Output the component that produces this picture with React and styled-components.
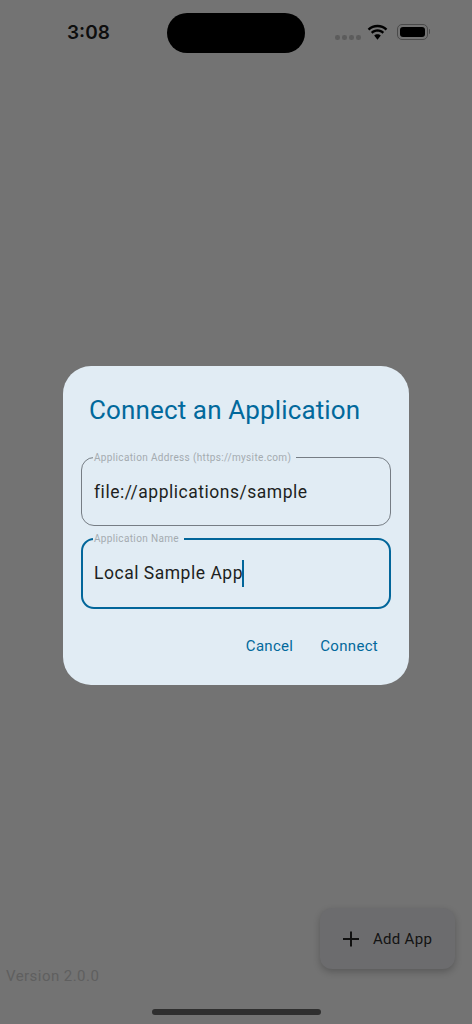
import React from "react";
import styled, { createGlobalStyle } from "styled-components";

const GlobalStyle = createGlobalStyle`
  html, body {
    margin: 0;
    padding: 0;
    background: #737373;
  }
  * {
    box-sizing: border-box;
  }
`;

const Page = styled.div`
  position: relative;
  width: 472px;
  height: 1024px;
  overflow: hidden;
  display: flex;
  flex-direction: column;
  background: #737373;
  font-family: Roboto, "Liberation Sans", sans-serif;
`;

const StatusBar = styled.div`
  height: 53px;
  padding-top: 13px;
  display: grid;
  grid-template-columns: 167px 138px 1fr;
  align-items: start;
`;

const Clock = styled.div`
  padding: 9px 0 0 67px;
  font: 600 19px/21px Inter, "Liberation Sans", sans-serif;
  color: #0e0e0e;
`;

const Island = styled.div`
  height: 40px;
  border-radius: 20px;
  background: #000;
`;

const StatusIcons = styled.div`
  display: flex;
  align-items: center;
  padding: 11px 0 0 30px;
`;

const SignalDots = styled.div`
  display: flex;
  gap: 2.5px;
  margin-top: 11px;
  margin-right: 6.5px;
`;

const SignalDot = styled.span`
  width: 4.5px;
  height: 4.5px;
  border-radius: 50%;
  background: #5c5c5c;
`;

const Battery = styled.div`
  width: 31px;
  height: 16px;
  margin-left: 9px;
  padding: 2px;
  border: 1px solid #4a4a4a;
  border-radius: 5px;
  position: relative;
  &::before {
    content: "";
    display: block;
    height: 100%;
    border-radius: 3px;
    background: #000;
  }
  &::after {
    content: "";
    position: absolute;
    right: -3px;
    top: 4px;
    width: 1.5px;
    height: 5px;
    border-radius: 0 2px 2px 0;
    background: #4a4a4a;
  }
`;

const Body = styled.div`
  flex: 1;
`;

const Footer = styled.div`
  display: flex;
  justify-content: space-between;
  align-items: flex-end;
  padding: 0 17px 0 6px;
  margin-bottom: 23px;
`;

const Version = styled.div`
  font-size: 15px;
  line-height: 20px;
  letter-spacing: 0.45px;
  color: #5f5f5f;
`;

const AddButton = styled.div`
  width: 135px;
  height: 61px;
  margin-bottom: 17px;
  display: flex;
  align-items: center;
  gap: 13px;
  padding-left: 22px;
  border-radius: 12px;
  background: #6c6c6e;
  box-shadow: 0 3px 7px rgba(0, 0, 0, 0.22);
  color: #131313;
  font-size: 15px;
  letter-spacing: 0.3px;
`;

const HomeBar = styled.div`
  width: 169px;
  height: 6px;
  margin: 0 auto 9px;
  border-radius: 3px;
  background: #2f2f2f;
`;

const Scrim = styled.div`
  position: absolute;
  inset: 0;
  display: flex;
  justify-content: center;
  align-items: flex-start;
  padding-top: 366px;
`;

const Dialog = styled.div`
  width: 346px;
  height: 319px;
  padding: 24px 18px 0;
  border-radius: 28px;
  background: #e1ecf4;
`;

const Title = styled.h2`
  margin: 0 0 21px 8px;
  font-size: 26px;
  font-weight: 400;
  line-height: 40px;
  letter-spacing: 0.13px;
  color: #02699c;
`;

const Field = styled.fieldset`
  height: ${(p) => (p.$focused ? "77px" : "75px")};
  margin: 0 0 ${(p) => (p.$focused ? "0" : "6px")};
  padding: 0 0 0 ${(p) => (p.$focused ? "11px" : "12px")};
  min-width: 0;
  border: ${(p) => (p.$focused ? "2px solid #02669a" : "1px solid #767d84")};
  border-radius: 13px;
`;

const FieldLabel = styled.legend`
  padding: 0 5px 0 1px;
  margin-left: -1px;
  font-size: 10px;
  line-height: 13px;
  letter-spacing: 0.35px;
  color: #a4abb0;
`;

const FieldValue = styled.div`
  display: flex;
  align-items: center;
  height: 30px;
  margin-top: 13px;
  font-size: 17.5px;
  letter-spacing: 0.52px;
  color: #1d1f21;
`;

const Caret = styled.span`
  width: 2px;
  height: 27px;
  margin-left: -1px;
  background: #02669a;
`;

const Actions = styled.div`
  display: flex;
  justify-content: flex-end;
  gap: 27px;
  margin-top: 27px;
  padding-right: 13px;
`;

const ActionButton = styled.div`
  font-size: 15px;
  line-height: 20px;
  letter-spacing: 0.3px;
  color: #02699c;
`;

function WifiIcon() {
  return (
    <svg width="21" height="16" viewBox="1 0 19 15" fill="#000">
      <path d="M10.5 3.1c2.9 0 5.6 1.1 7.6 3l1.6-1.7C17.3 2.1 14 .7 10.5.7S3.700 2.100 1.300 4.400l1.600 1.700c2-1.900 4.700-3 7.600-3z" />
      <path d="M10.500 7.300c1.700 0 3.300.6 4.600 1.800l1.600-1.700c-1.700-1.500-3.900-2.400-6.200-2.400s-4.500.9-6.200 2.400l1.600 1.700c1.300-1.200 2.900-1.800 4.600-1.800z" />
      <path d="M10.500 9.600c-1.200 0-2.300.5-3.100 1.200l3.100 3.900 3.100-3.900c-.8-.7-1.900-1.200-3.100-1.200z" />
    </svg>
  );
}

function PlusIcon() {
  return (
    <svg width="18" height="18" viewBox="0 0 18 18" stroke="#111" strokeWidth="2" fill="none">
      <path d="M9 1.500v15M1 9h16" />
    </svg>
  );
}

export default function App() {
  return (
    <Page>
      <GlobalStyle />
      <StatusBar>
        <Clock>3:08</Clock>
        <Island />
        <StatusIcons>
          <SignalDots>
            <SignalDot />
            <SignalDot />
            <SignalDot />
            <SignalDot />
          </SignalDots>
          <WifiIcon />
          <Battery />
        </StatusIcons>
      </StatusBar>
      <Body />
      <Footer>
        <Version>Version 2.0.0</Version>
        <AddButton>
          <PlusIcon />
          Add App
        </AddButton>
      </Footer>
      <HomeBar />
      <Scrim>
        <Dialog>
          <Title>Connect an Application</Title>
          <Field>
            <FieldLabel>Application Address (https://mysite.com)</FieldLabel>
            <FieldValue>file://applications/sample</FieldValue>
          </Field>
          <Field $focused>
            <FieldLabel>Application Name</FieldLabel>
            <FieldValue>
              Local Sample App
              <Caret />
            </FieldValue>
          </Field>
          <Actions>
            <ActionButton>Cancel</ActionButton>
            <ActionButton>Connect</ActionButton>
          </Actions>
        </Dialog>
      </Scrim>
    </Page>
  );
}
